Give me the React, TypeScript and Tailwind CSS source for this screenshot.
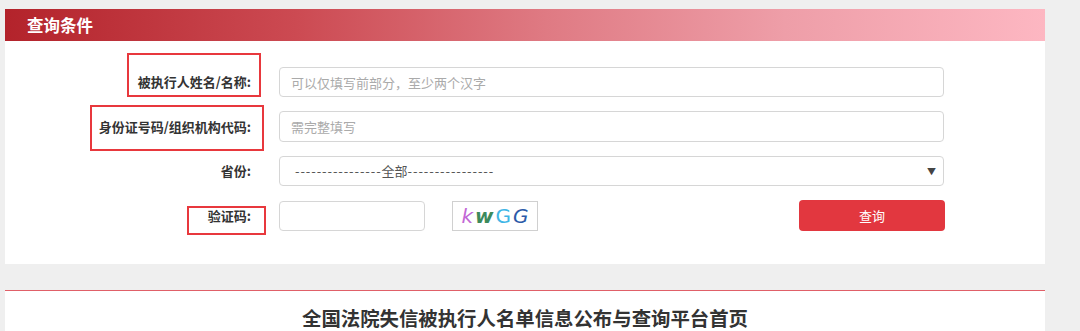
import { useState } from "react";

const cjk = "font-['Noto_Sans_CJK_SC','Noto_Sans',sans-serif]";

function Row({ label, children }: { label: string; children: React.ReactNode }) {
  return (
    <div className="flex items-center h-[30px]">
      <label className="w-[246px] shrink-0 text-right text-[13px] font-bold text-[#333]">
        {label}
      </label>
      <div className="ml-[28px] flex items-center flex-1">{children}</div>
    </div>
  );
}

export default function App() {
  const [name, setName] = useState("");
  const [id, setId] = useState("");
  const [code, setCode] = useState("");

  return (
    <div className={`w-[1080px] h-[331px] overflow-hidden bg-[#efefef] pt-[9px] pl-[5px] ${cjk}`}>
      {/* 查询条件 */}
      <div className="relative w-[1040px] bg-white">
        <div className="h-[32px] flex items-center pl-[22px] bg-[linear-gradient(to_right,#b3232b_0%,#cc4a52_28%,#df7a83_52%,#ee9ea8_75%,#fdb7c2_100%)]">
          <span className="text-white text-[16.5px] font-bold">查询条件</span>
        </div>

        <div className="pt-[26px] pb-[33px] flex flex-col gap-[14.5px]">
          <Row label="被执行人姓名/名称:">
            <input
              value={name}
              onChange={(e) => setName(e.target.value)}
              placeholder="可以仅填写前部分，至少两个汉字"
              className="w-[665px] h-[30px] border border-[#d6d6d6] rounded-[4px] px-[11px] text-[13px] text-[#555] placeholder:text-[#aaa] outline-none"
            />
          </Row>
          <Row label="身份证号码/组织机构代码:">
            <input
              value={id}
              onChange={(e) => setId(e.target.value)}
              placeholder="需完整填写"
              className="w-[665px] h-[31px] border border-[#d6d6d6] rounded-[4px] px-[11px] text-[13px] text-[#555] placeholder:text-[#aaa] outline-none"
            />
          </Row>
          <Row label="省份:">
            <div className="relative w-[665px] h-[30px] border border-[#d6d6d6] rounded-[4px] flex items-center pl-[15px] text-[13px] text-[#555]">
              <span className="tracking-[0.9px]">----------------</span>
              <span>全部</span>
              <span className="tracking-[0.9px]">----------------</span>
              <span className="absolute right-[7px] top-[8px] text-[9px] text-[#444]">▼</span>
            </div>
          </Row>
          <Row label="验证码:">
            <input
              value={code}
              onChange={(e) => setCode(e.target.value)}
              className="w-[146px] h-[30px] border border-[#d6d6d6] rounded-[4px] px-[11px] text-[13px] outline-none"
            />
            <div className="ml-[27px] w-[86px] h-[30px] border border-[#d0d0d0] flex items-center justify-center gap-[2px] italic font-['DejaVu_Sans',sans-serif] text-[20px] leading-none">
              <span className="text-[#c267d6]">k</span>
              <span className="text-[#3d8a5c] font-bold">w</span>
              <span className="text-[#3fb6e6] not-italic">G</span>
              <span className="text-[#2c5aa8]">G</span>
            </div>
            <button className="ml-[261px] w-[146px] h-[31px] rounded-[4px] bg-[#e2373f] text-white text-[13px]">
              查询
            </button>
          </Row>
        </div>

        {/* annotation boxes */}
        <div className="absolute left-[122px] top-[44px] w-[134px] h-[44px] border-2 border-[#e8383d]" />
        <div className="absolute left-[85px] top-[96px] w-[174px] h-[46px] border-2 border-[#e8383d]" />
        <div className="absolute left-[182px] top-[197px] w-[79px] h-[29px] border-2 border-[#e8383d]" />
      </div>

      {/* 首页 */}
      <div className="mt-[26px] w-[1040px] h-[60px] bg-white border-t border-[#e06068] flex justify-center pt-[14px]">
        <h1 className="text-[19.4px] font-bold text-[#333] leading-[26px]">全国法院失信被执行人名单信息公布与查询平台首页</h1>
      </div>
    </div>
  );
}
